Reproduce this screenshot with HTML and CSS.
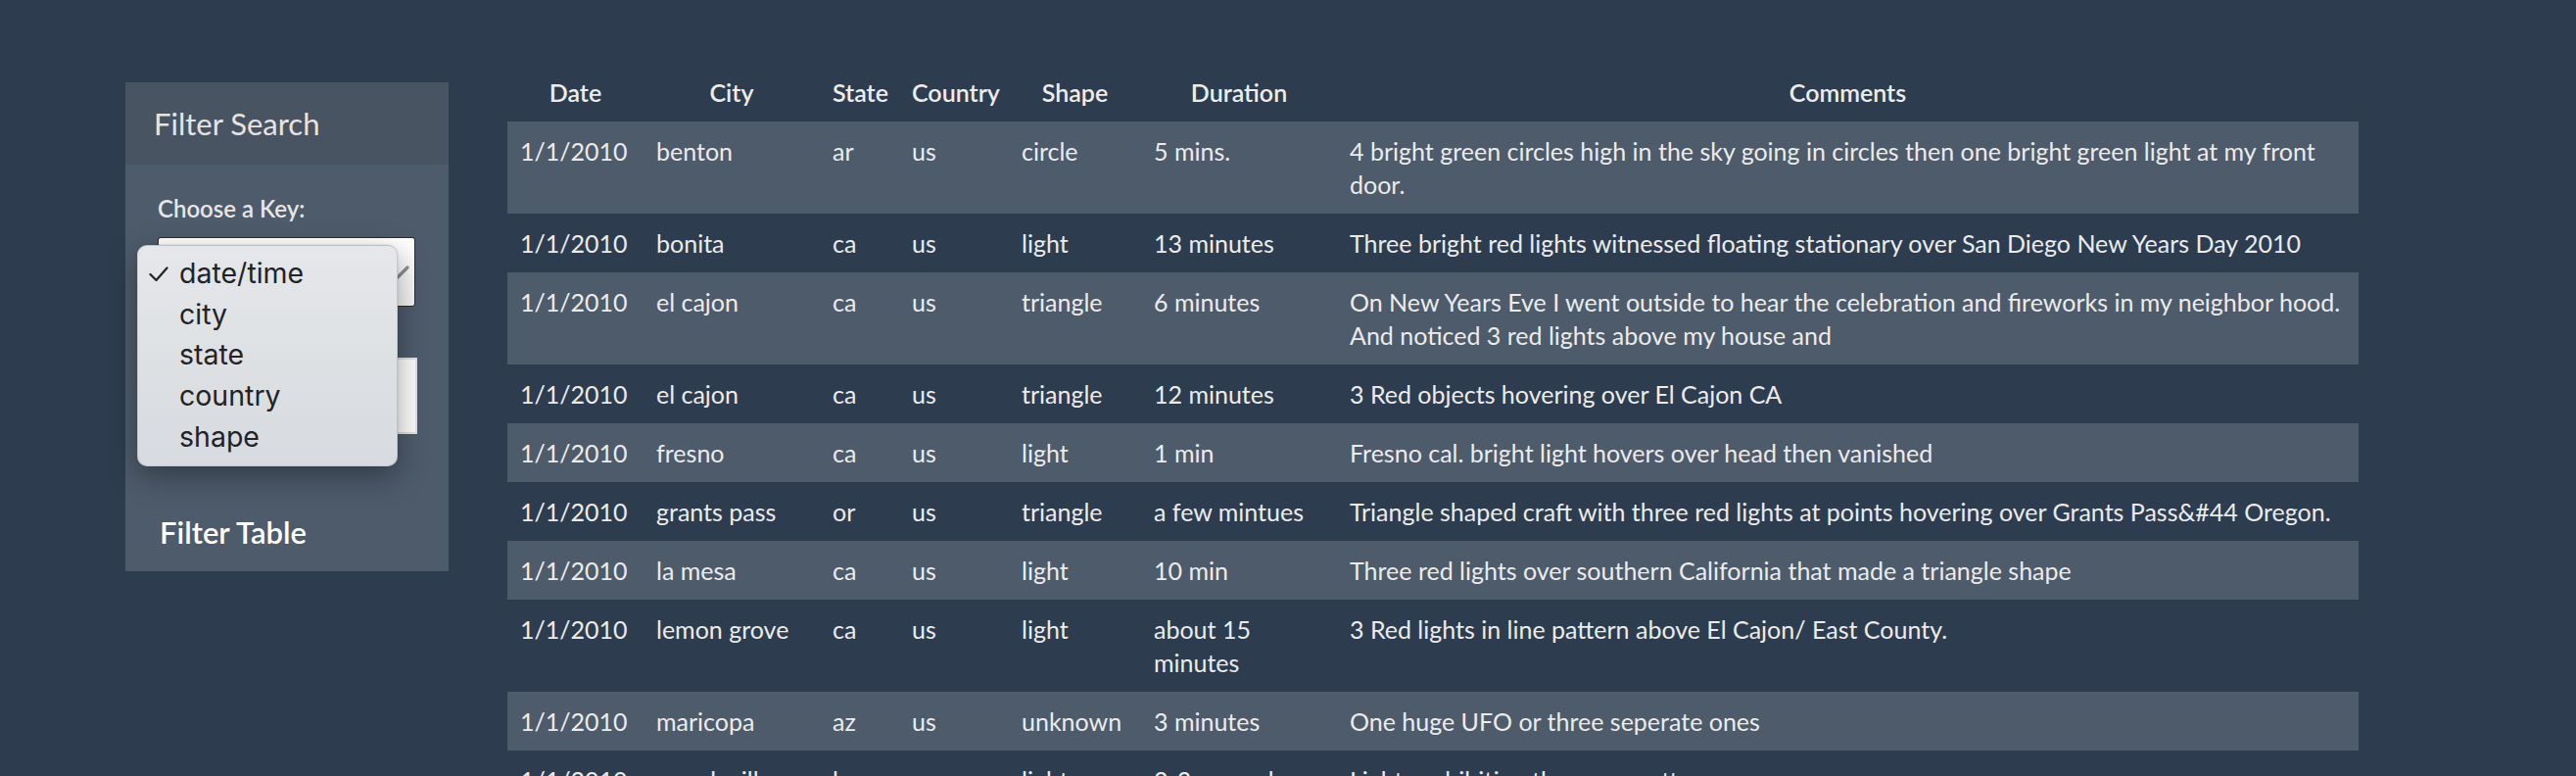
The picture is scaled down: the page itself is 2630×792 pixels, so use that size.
FILE: index.html
```html
<!DOCTYPE html>
<html lang="en">
<head>
<meta charset="utf-8">
<title>UFO Sightings</title>
<link rel="stylesheet" href="styles.css">
</head>
<body>
<div class="page">
  <aside class="sidebar">
    <div class="sidebar-header">Filter Search</div>
    <div class="sidebar-body">
      <label class="field-label">Choose a Key:</label>
      <div class="select">
        <svg class="select-arrow" width="24" height="14" viewBox="0 0 24 14"><polyline points="2,2 12,12 22,2" fill="none" stroke="#8a8d91" stroke-width="3.2" stroke-linecap="round" stroke-linejoin="round"/></svg>
      </div>
      <div class="text-input"></div>
      <div class="filter-table">Filter Table</div>
    </div>
    <ul class="menu">
      <li class="menu-item checked"><svg class="check" width="20" height="16" viewBox="0 0 20 16"><polyline points="1.5,8 7.5,14 18.5,1.5" fill="none" stroke="#262626" stroke-width="2.3" stroke-linecap="round" stroke-linejoin="round"/></svg>date/time</li>
      <li class="menu-item">city</li>
      <li class="menu-item">state</li>
      <li class="menu-item">country</li>
      <li class="menu-item">shape</li>
    </ul>
  </aside>
  <main class="content">
    <table class="ufo-table">
      <colgroup>
        <col class="c-date"><col class="c-city"><col class="c-state"><col class="c-country"><col class="c-shape"><col class="c-duration"><col class="c-comments">
      </colgroup>
      <thead>
        <tr><th>Date</th><th>City</th><th>State</th><th>Country</th><th>Shape</th><th>Duration</th><th>Comments</th></tr>
      </thead>
      <tbody>
        <tr><td>1/1/2010</td><td>benton</td><td>ar</td><td>us</td><td>circle</td><td>5 mins.</td><td>4 bright green circles high in the sky going in circles then one bright green light at my front door.</td></tr>
        <tr><td>1/1/2010</td><td>bonita</td><td>ca</td><td>us</td><td>light</td><td>13 minutes</td><td>Three bright red lights witnessed floating stationary over San Diego New Years Day 2010</td></tr>
        <tr><td>1/1/2010</td><td>el cajon</td><td>ca</td><td>us</td><td>triangle</td><td>6 minutes</td><td>On New Years Eve I went outside to hear the celebration and fireworks in my neighbor hood. And noticed 3 red lights above my house and</td></tr>
        <tr><td>1/1/2010</td><td>el cajon</td><td>ca</td><td>us</td><td>triangle</td><td>12 minutes</td><td>3 Red objects hovering over El Cajon CA</td></tr>
        <tr><td>1/1/2010</td><td>fresno</td><td>ca</td><td>us</td><td>light</td><td>1 min</td><td>Fresno cal. bright light hovers over head then vanished</td></tr>
        <tr><td>1/1/2010</td><td>grants pass</td><td>or</td><td>us</td><td>triangle</td><td>a few mintues</td><td>Triangle shaped craft with three red lights at points hovering over Grants Pass&amp;#44 Oregon.</td></tr>
        <tr><td>1/1/2010</td><td>la mesa</td><td>ca</td><td>us</td><td>light</td><td>10 min</td><td>Three red lights over southern California that made a triangle shape</td></tr>
        <tr><td>1/1/2010</td><td>lemon grove</td><td>ca</td><td>us</td><td>light</td><td>about 15 minutes</td><td>3 Red lights in line pattern above El Cajon/ East County.</td></tr>
        <tr><td>1/1/2010</td><td>maricopa</td><td>az</td><td>us</td><td>unknown</td><td>3 minutes</td><td>One huge UFO or three seperate ones</td></tr>
        <tr><td>1/1/2010</td><td>mandeville</td><td>la</td><td>us</td><td>light</td><td>2-3 seconds</td><td>Lights exhibiting the same pattern</td></tr>
        <tr><td>1/1/2010</td><td>oakland</td><td>ca</td><td>us</td><td>light</td><td>1 minute</td><td>Bright light moving slowly across the sky</td></tr>
      </tbody>
    </table>
  </main>
</div>
</body>
</html>
```

FILE: styles.css
```css
html, body {
  margin: 0;
  padding: 0;
  background: #2d3d4f;
  font-family: "Lato", "Open Sans", sans-serif;
  color: #ebebeb;
}

.page {
  display: flex;
  align-items: flex-start;
  gap: 60px;
  padding-left: 128px;
}

/* Sidebar panel */
.sidebar {
  position: relative;
  width: 330px;
  margin-top: 84px;
  background: #4e5b6b;
}

.sidebar-header {
  height: 84px;
  display: flex;
  align-items: center;
  padding: 0 29px;
  background: #485462;
  font-size: 31px;
  color: #e4e4e4;
}

.sidebar-body {
  padding: 28px 33px 22px;
  display: flex;
  flex-direction: column;
  align-items: flex-start;
}

.field-label {
  font-size: 24px;
  line-height: 34px;
  font-weight: 600;
  color: #e6e6e6;
}

.select {
  position: relative;
  box-sizing: border-box;
  width: 263px;
  height: 71px;
  margin-top: 12px;
  border: 1.5px solid #2b2b2b;
  border-radius: 3px;
  background: linear-gradient(#ffffff, #f2f2f2);
}

.select-arrow {
  position: absolute;
  right: 5px;
  top: 28px;
}

.text-input {
  box-sizing: border-box;
  width: 265px;
  height: 78px;
  margin-top: 52px;
  border: 2px solid #e2e2e2;
  background: #fbfbfb;
}

.filter-table {
  margin-top: 82px;
  padding-left: 2px;
  font-size: 31px;
  line-height: 36px;
  font-weight: 600;
  color: #ffffff;
}

/* Open select popup menu */
.menu {
  position: absolute;
  left: 12px;
  top: 166px;
  box-sizing: border-box;
  width: 266px;
  height: 226px;
  margin: 0;
  padding: 7px 0 10px;
  list-style: none;
  border-radius: 10px;
  border: 1px solid rgba(0, 0, 0, 0.12);
  background: linear-gradient(#e5e7ea, #d7dade);
  box-shadow: 0 10px 30px rgba(0, 0, 0, 0.35), 0 0 2px rgba(0, 0, 0, 0.2);
  font-family: "Inter", "Roboto", sans-serif;
  font-size: 28.5px;
  color: #222326;
}

.menu-item {
  position: relative;
  height: 41.67px;
  line-height: 41.67px;
  padding-left: 42px;
}

.check {
  position: absolute;
  left: 11px;
  top: 14px;
}

/* Table */
.content {
  margin-top: 64px;
}

.ufo-table {
  width: 1890px;
  table-layout: fixed;
  border-collapse: collapse;
  font-size: 25px;
  line-height: 34px;
}

.c-date { width: 139px; }
.c-city { width: 180px; }
.c-state { width: 81px; }
.c-country { width: 112px; }
.c-shape { width: 135px; }
.c-duration { width: 200px; }
.c-comments { width: 1043px; }

.ufo-table th {
  padding: 13px 13px;
  text-align: center;
  font-weight: 600;
  color: #ececec;
}

.ufo-table td {
  padding: 13px 13px;
  vertical-align: top;
  text-align: left;
}

.ufo-table tbody tr:nth-child(odd) {
  background: #4e5b6b;
}
```
